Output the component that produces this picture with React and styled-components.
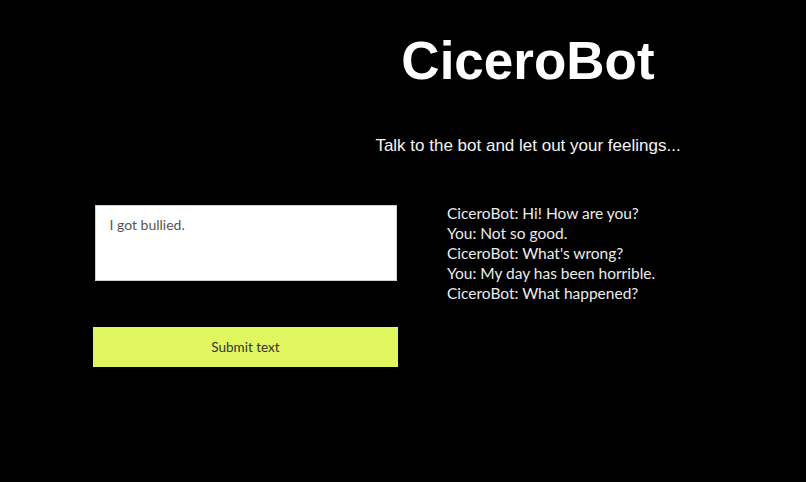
import React, { useState } from "react";
import styled, { createGlobalStyle } from "styled-components";

const chatLog = [
  "CiceroBot: Hi! How are you?",
  "You: Not so good.",
  "CiceroBot: What's wrong?",
  "You: My day has been horrible.",
  "CiceroBot: What happened?",
];

const GlobalStyle = createGlobalStyle`
  html, body {
    margin: 0;
    padding: 0;
    background: #000;
  }
  body {
    width: 806px;
    height: 482px;
    overflow: hidden;
  }
`;

const Page = styled.div`
  width: 806px;
  height: 482px;
  background: #000;
  display: flex;
  flex-direction: column;
`;

const Header = styled.header`
  padding-left: 250px;
  padding-top: 30px;
  display: flex;
  flex-direction: column;
  align-items: center;
  font-family: "Liberation Sans", Arial, sans-serif;
  color: #fff;
`;

const Title = styled.h1`
  margin: 0;
  font-size: 53px;
  line-height: 62px;
  font-weight: 700;
`;

const Subtitle = styled.p`
  margin: 44px 0 0;
  font-size: 17px;
  line-height: 20px;
  color: #f4f4f4;
`;

const Main = styled.div`
  display: flex;
  padding-left: 93px;
  margin-top: 49px;
  gap: 49px;
`;

const InputColumn = styled.div`
  width: 305px;
  display: flex;
  flex-direction: column;
  align-items: center;
  gap: 46px;
`;

const TextBox = styled.textarea`
  box-sizing: border-box;
  width: 302px;
  height: 76px;
  margin: 0;
  padding: 10px 14px;
  border: 1px solid #d0d0d0;
  border-radius: 0;
  background: #fff;
  resize: none;
  outline: none;
  font-family: Lato, "Open Sans", sans-serif;
  font-size: 14px;
  line-height: 18px;
  color: #555;
`;

const SubmitButton = styled.button`
  width: 305px;
  height: 40px;
  border: none;
  background: #e0f65e;
  font-family: Lato, "Open Sans", sans-serif;
  font-size: 13.5px;
  color: #333;
  cursor: pointer;
`;

const ChatLog = styled.div`
  margin-top: -2px;
  display: flex;
  flex-direction: column;
  font-family: Lato, "Open Sans", sans-serif;
  font-size: 15.5px;
  line-height: 20px;
  color: #ececec;
`;

const ChatLine = styled.span``;

export default function App() {
  const [text, setText] = useState("I got bullied.");
  return (
    <Page>
      <GlobalStyle />
      <Header>
        <Title>CiceroBot</Title>
        <Subtitle>Talk to the bot and let out your feelings...</Subtitle>
      </Header>
      <Main>
        <InputColumn>
          <TextBox value={text} onChange={(e) => setText(e.target.value)} />
          <SubmitButton>Submit text</SubmitButton>
        </InputColumn>
        <ChatLog>
          {chatLog.map((line, i) => (
            <ChatLine key={i}>{line}</ChatLine>
          ))}
        </ChatLog>
      </Main>
    </Page>
  );
}
